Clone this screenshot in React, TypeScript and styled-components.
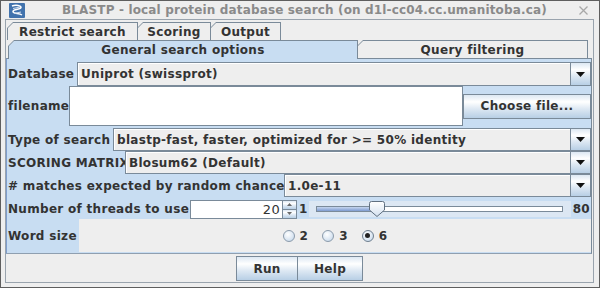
import styled, { createGlobalStyle } from "styled-components";

const LINE = "#7a8a99";
const BLUE_PANEL = "#c8ddf2";
const GREY = "#eeeeee";
const BUTTON_BG = "linear-gradient(#dde8f3 0%, #ffffff 30%, #dde8f3 60%, #b8cfe5 100%)";

const GlobalStyle = createGlobalStyle`
  body {
    margin: 0;
    font-family: "DejaVu Sans", "Liberation Sans", sans-serif;
    font-size: 12px;
    font-weight: bold;
    letter-spacing: 0.3px;
    color: #333333;
  }
`;

const Window = styled.div`
  width: 600px;
  height: 288px;
  box-sizing: border-box;
  border: 1px solid #5e5e5e;
  background: ${GREY};
  display: flex;
  flex-direction: column;
`;

const TitleBar = styled.div`
  height: 18px;
  flex-shrink: 0;
  display: flex;
  align-items: center;
  padding: 0 10px 0 8px;
`;

const TitleText = styled.div`
  flex: 1;
  margin-left: 37px;
  color: #8a8a8a;
  letter-spacing: 0.15px;
  white-space: nowrap;
`;

const CloseBox = styled.div`
  width: 11px;
  height: 11px;
  display: flex;
`;

const Body = styled.div`
  flex: 1;
  min-height: 0;
  margin: 0 5px 4px 4px;
  border: 1px solid #99a3ad;
  display: flex;
  flex-direction: column;
`;

const TabRow = styled.div<{ $top: number; $left: number }>`
  display: flex;
  height: 18px;
  flex-shrink: 0;
  margin-top: ${(p) => p.$top}px;
  padding-left: ${(p) => p.$left}px;
`;

const Tab = styled.div<{ $w: number; $selected?: boolean }>`
  position: relative;
  z-index: ${(p) => (p.$selected ? 2 : 1)};
  width: ${(p) => p.$w}px;
  height: ${(p) => (p.$selected ? 19 : 18)}px;
  flex-shrink: 0;
  box-sizing: border-box;
  margin-right: -1px;
  padding: 1px 1px 0 1px;
  background: ${LINE};
  clip-path: polygon(6px 0, 100% 0, 100% 100%, 0 100%, 0 6px);
`;

const TabFace = styled.div<{ $selected?: boolean }>`
  height: 100%;
  background: ${(p) => (p.$selected ? BLUE_PANEL : GREY)};
  clip-path: polygon(5px 0, 100% 0, 100% 100%, 0 100%, 0 5px);
  display: flex;
  align-items: center;
  justify-content: center;
  white-space: nowrap;
`;

const Panel = styled.div`
  position: relative;
  z-index: 1;
  margin-right: 1px;
  background: ${BLUE_PANEL};
  border-top: 1px solid ${LINE};
  border-left: 1px solid #7f9dcc;
  border-right: 1px solid ${LINE};
  border-bottom: 1px solid #8f9fb0;
  padding: 3px 0 1px 0;
  display: flex;
  flex-direction: column;
`;

const Row = styled.div<{ $h: number; $top?: number }>`
  display: flex;
  align-items: center;
  height: ${(p) => p.$h}px;
  margin-top: ${(p) => p.$top ?? 0}px;
  flex-shrink: 0;
`;

const Label = styled.div<{ $w: number }>`
  width: ${(p) => p.$w}px;
  flex-shrink: 0;
  white-space: nowrap;
  padding-left: 1px;
  box-sizing: border-box;
`;

const Combo = styled.div`
  flex: 1;
  align-self: stretch;
  box-sizing: border-box;
  border: 1px solid ${LINE};
  background: ${GREY};
  box-shadow: inset 1px 1px #ffffff;
  display: flex;
`;

const ComboText = styled.div`
  flex: 1;
  padding-left: 3px;
  display: flex;
  align-items: center;
  white-space: nowrap;
  overflow: hidden;
`;

const ComboArrow = styled.div`
  width: 19px;
  border-left: 1px solid ${LINE};
  background: ${BUTTON_BG};
  display: flex;
  align-items: center;
  justify-content: center;
`;

const TextField = styled.div`
  flex: 1;
  align-self: stretch;
  box-sizing: border-box;
  border: 1px solid ${LINE};
  background: #ffffff;
`;

const PushButton = styled.div<{ $w: number; $h: number }>`
  width: ${(p) => p.$w}px;
  height: ${(p) => p.$h}px;
  flex-shrink: 0;
  box-sizing: border-box;
  border: 1px solid ${LINE};
  background: ${BUTTON_BG};
  display: flex;
  align-items: center;
  justify-content: center;
  white-space: nowrap;
`;

const SpinnerField = styled.div`
  width: 93px;
  height: 19px;
  box-sizing: border-box;
  border: 1px solid ${LINE};
  background: #ffffff;
  display: flex;
  align-items: center;
  justify-content: flex-end;
  padding-right: 2px;
  font-weight: normal;
  font-size: 13px;
`;

const SpinnerButtons = styled.div`
  width: 14px;
  height: 19px;
  box-sizing: border-box;
  border: 1px solid ${LINE};
  border-left: none;
  display: flex;
  flex-direction: column;
`;

const SpinnerHalf = styled.div<{ $bottom?: boolean }>`
  flex: 1;
  background: ${BUTTON_BG};
  border-top: ${(p) => (p.$bottom ? `1px solid ${LINE}` : "none")};
  display: flex;
  align-items: center;
  justify-content: center;
`;

const SliderEnd = styled.div`
  padding: 0 1px 0 2px;
  white-space: nowrap;
`;

const SliderBox = styled.div`
  position: relative;
  flex: 1;
  height: 16px;
  background: #dce7f3;
  display: flex;
  align-items: center;
  padding: 0 8px 0 7px;
`;

const Track = styled.div`
  flex: 1;
  height: 6px;
  box-sizing: border-box;
  border: 1px solid ${LINE};
  background: #ffffff;
  display: flex;
`;

const TrackFill = styled.div`
  background: linear-gradient(#c6d6ee, #7d9bd1);
`;

const Thumb = styled.svg`
  position: absolute;
  top: 0;
`;

const RadioPanel = styled.div`
  flex: 1;
  align-self: stretch;
  background: ${GREY};
  display: flex;
  align-items: center;
  justify-content: center;
  gap: 14px;
`;

const RadioItem = styled.div`
  display: flex;
  align-items: center;
  gap: 5px;
`;

const RadioDot = styled.div<{ $on?: boolean }>`
  width: 12px;
  height: 12px;
  box-sizing: border-box;
  border-radius: 50%;
  border: 1px solid ${(p) => (p.$on ? "#6f7f8f" : "#8b9bab")};
  background: radial-gradient(circle at 40% 35%, #ffffff 0%, #dde8f3 55%, #b8cfe5 100%);
  display: flex;
  align-items: center;
  justify-content: center;
  &::after {
    content: "";
    width: 5px;
    height: 5px;
    border-radius: 50%;
    background: ${(p) => (p.$on ? "#222222" : "transparent")};
  }
`;

const ButtonBar = styled.div`
  height: 28px;
  box-sizing: border-box;
  padding-top: 2px;
  display: flex;
  justify-content: center;
  align-items: flex-start;
`;

const Logo = () => (
  <svg width="16" height="15" viewBox="0 0 16 15">
    <rect x="0" y="0" width="16" height="15" rx="1" fill="#4273ad" />
    <path d="M3 3 C7 1.5, 12 2.5, 12 4.5 C12 6.5, 4 6, 4 8.5 C4 11, 10 10, 13 12" stroke="#ffffff" strokeWidth="1.5" fill="none" />
    <path d="M4 5.5 L11 4 M5 10.5 L12 9" stroke="#cfdcee" strokeWidth="1.2" fill="none" />
  </svg>
);

const DownArrow = () => (
  <svg width="9" height="5" viewBox="0 0 9 5">
    <polygon points="0,0 9,0 4.5,5" fill="#111111" />
  </svg>
);

const SmallArrow = ({ up }: { up?: boolean }) => (
  <svg width="5" height="3" viewBox="0 0 5 3">
    <polygon points={up ? "0,3 5,3 2.5,0" : "0,0 5,0 2.5,3"} fill="#6a6a6a" />
  </svg>
);

const ComboBox = ({ text }: { text: string }) => (
  <Combo>
    <ComboText>{text}</ComboText>
    <ComboArrow>
      <DownArrow />
    </ComboArrow>
  </Combo>
);

const Radio = ({ label, on }: { label: string; on?: boolean }) => (
  <RadioItem>
    <RadioDot $on={on} />
    <span>{label}</span>
  </RadioItem>
);

const threads = 20;
const minThreads = 1;
const maxThreads = 80;
const trackWidth = 251;

const App = () => {
  const fill = Math.round(((threads - minThreads) / (maxThreads - minThreads)) * (trackWidth - 2));
  return (
    <>
      <GlobalStyle />
      <Window>
        <TitleBar>
          <Logo />
          <TitleText>BLASTP - local protein database search (on d1l-cc04.cc.umanitoba.ca)</TitleText>
          <CloseBox>
            <svg width="11" height="11" viewBox="0 0 11 11">
              <path d="M1.5 1.5 L9.5 9.5 M9.5 1.5 L1.5 9.5" stroke="#a8a8a8" strokeWidth="1.3" />
            </svg>
          </CloseBox>
        </TitleBar>
        <Body>
          <TabRow $top={2} $left={1}>
            <Tab $w={131}>
              <TabFace>Restrict search</TabFace>
            </Tab>
            <Tab $w={74}>
              <TabFace>Scoring</TabFace>
            </Tab>
            <Tab $w={71}>
              <TabFace>Output</TabFace>
            </Tab>
          </TabRow>
          <TabRow $top={0} $left={2}>
            <Tab $w={350} $selected>
              <TabFace $selected>General search options</TabFace>
            </Tab>
            <Tab $w={231}>
              <TabFace>Query filtering</TabFace>
            </Tab>
          </TabRow>
          <Panel>
            <Row $h={24}>
              <Label $w={70}>Database</Label>
              <ComboBox text="Uniprot (swissprot)" />
            </Row>
            <Row $h={40}>
              <Label $w={62}>filename</Label>
              <TextField />
              <PushButton $w={128} $h={25}>Choose file...</PushButton>
            </Row>
            <Row $h={23} $top={2}>
              <Label $w={106}>Type of search</Label>
              <ComboBox text="blastp-fast, faster, optimized for >= 50% identity" />
            </Row>
            <Row $h={23}>
              <Label $w={118}>SCORING MATRIX</Label>
              <ComboBox text="Blosum62 (Default)" />
            </Row>
            <Row $h={23}>
              <Label $w={277}># matches expected by random chance</Label>
              <ComboBox text="1.0e-11" />
            </Row>
            <Row $h={20} $top={2}>
              <Label $w={183}>Number of threads to use</Label>
              <SpinnerField>{threads}</SpinnerField>
              <SpinnerButtons>
                <SpinnerHalf>
                  <SmallArrow up />
                </SpinnerHalf>
                <SpinnerHalf $bottom>
                  <SmallArrow />
                </SpinnerHalf>
              </SpinnerButtons>
              <SliderEnd>{minThreads}</SliderEnd>
              <SliderBox>
                <Track>
                  <TrackFill style={{ width: fill }} />
                </Track>
                <Thumb width="16" height="16" viewBox="0 0 16 16" style={{ left: fill }}>
                  <defs>
                    <linearGradient id="thumbGrad" x1="0" y1="0" x2="0" y2="1">
                      <stop offset="0" stopColor="#ffffff" />
                      <stop offset="1" stopColor="#d4e1f0" />
                    </linearGradient>
                  </defs>
                  <path d="M2.5 0.5 H13.5 Q15.5 0.5 15.5 2.5 V9 L8 15.5 L0.5 9 V2.5 Q0.5 0.5 2.5 0.5 Z" fill="url(#thumbGrad)" stroke="#5f6f80" />
                </Thumb>
              </SliderBox>
              <SliderEnd>{maxThreads}</SliderEnd>
            </Row>
            <Row $h={33}>
              <Label $w={72}>Word size</Label>
              <RadioPanel>
                <Radio label="2" />
                <Radio label="3" />
                <Radio label="6" on />
              </RadioPanel>
            </Row>
          </Panel>
          <ButtonBar>
            <PushButton $w={62} $h={25}>Run</PushButton>
            <PushButton $w={66} $h={25} style={{ marginLeft: -1 }}>Help</PushButton>
          </ButtonBar>
        </Body>
      </Window>
    </>
  );
};

export default App;
